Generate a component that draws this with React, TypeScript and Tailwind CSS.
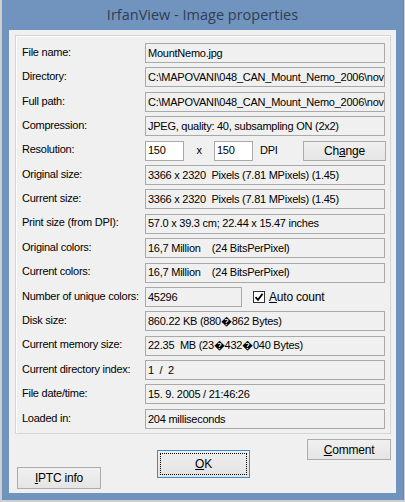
import React from "react";

const font = { fontFamily: '"Liberation Sans", Arial, sans-serif' };

function Field({ children, w = "w-[240px]" }: { children: React.ReactNode; w?: string }) {
  return (
    <div className={`${w} h-[20px] shrink-0 border border-[#a9a9a9] bg-[#f0f0f0] pl-[2px] flex items-center overflow-hidden whitespace-nowrap`}>
      {children}
    </div>
  );
}

function Row({ label, children }: { label: string; children: React.ReactNode }) {
  return (
    <div className="flex items-center h-[20px]">
      <div className="w-[123px] shrink-0 whitespace-nowrap -mt-[2px]">{label}</div>
      {children}
    </div>
  );
}

function Btn({ children, cls }: { children: React.ReactNode; cls: string }) {
  return (
    <div
      className={`${cls} shrink-0 border border-[#acacac] bg-gradient-to-b from-[#f0f0f0] to-[#e5e5e5] flex items-center justify-center text-[12px] tracking-[-0.2px] text-[#000]`}
    >
      {children}
    </div>
  );
}

export default function App() {
  const D = "\uFFFD";
  return (
    <div className="w-[405px] h-[502px] bg-[#cfcdd2] pl-[2px] overflow-hidden" style={font}>
      <div className="w-[402px] h-[500px] bg-[#7194bf] border-r border-[#6a86ab] flex flex-col">
        <div
          className="h-[30px] shrink-0 flex items-center justify-center text-[14.5px] text-[#2f3e50]"
          style={{ fontFamily: '"Open Sans", "Noto Sans", sans-serif' }}
        >
          IrfanView - Image properties
        </div>
        <div className="ml-[7px] w-[387px] h-[463px] bg-[#f0f0f0] pt-[5px] pl-[6px] text-[11px] tracking-[-0.25px] text-black">
          <div className="w-[376px] h-[399px] border border-[#d5d5d5] shadow-[inset_1px_1px_0_#ffffff] pt-[7px] pl-[6px] flex flex-col gap-[4.4px]">
            <Row label="File name:">
              <Field>MountNemo.jpg</Field>
            </Row>
            <Row label="Directory:">
              <Field>C:\MAPOVANI\048_CAN_Mount_Nemo_2006\nove\</Field>
            </Row>
            <Row label="Full path:">
              <Field>C:\MAPOVANI\048_CAN_Mount_Nemo_2006\nove\MountNemo.jpg</Field>
            </Row>
            <Row label="Compression:">
              <Field>JPEG, quality: 40, subsampling ON (2x2)</Field>
            </Row>
            <Row label="Resolution:">
              <div className="w-[39px] h-[20px] border border-[#a9a9a9] bg-white pl-[2px] flex items-center">150</div>
              <div className="w-[30px] text-center shrink-0">x</div>
              <div className="w-[39px] h-[20px] border border-[#a9a9a9] bg-white pl-[2px] flex items-center">150</div>
              <div className="ml-[7px] w-[43px] shrink-0">DPI</div>
              <Btn cls="w-[83px] h-[20px] text-[11.5px]">
                <span>
                  Ch<span className="underline">a</span>nge
                </span>
              </Btn>
            </Row>
            <Row label="Original size:">
              <Field>3366 x 2320&nbsp; Pixels (7.81 MPixels) (1.45)</Field>
            </Row>
            <Row label="Current size:">
              <Field>3366 x 2320&nbsp; Pixels (7.81 MPixels) (1.45)</Field>
            </Row>
            <Row label="Print size (from DPI):">
              <Field>57.0 x 39.3 cm; 22.44 x 15.47 inches</Field>
            </Row>
            <Row label="Original colors:">
              <Field>16,7 Million&nbsp;&nbsp;&nbsp; (24 BitsPerPixel)</Field>
            </Row>
            <Row label="Current colors:">
              <Field>16,7 Million&nbsp;&nbsp;&nbsp; (24 BitsPerPixel)</Field>
            </Row>
            <Row label="Number of unique colors:">
              <Field w="w-[97px]">45296</Field>
              <div className="ml-[11px] w-[12px] h-[12px] border border-[#333333] bg-white flex items-center justify-center shrink-0">
                <svg width="10" height="10" viewBox="0 0 10 10">
                  <path d="M1.5 5.2 L4 7.8 L8.6 1.8" stroke="#000" strokeWidth="1.8" fill="none" />
                </svg>
              </div>
              <div className="ml-[4px] text-[12px] tracking-[-0.2px]">
                <span className="underline">A</span>uto count
              </div>
            </Row>
            <Row label="Disk size:">
              <Field>860.22 KB (880{D}862 Bytes)</Field>
            </Row>
            <Row label="Current memory size:">
              <Field>22.35&nbsp; MB (23{D}432{D}040 Bytes)</Field>
            </Row>
            <Row label="Current directory index:">
              <Field>1&nbsp; /&nbsp; 2</Field>
            </Row>
            <Row label="File date/time:">
              <Field>15. 9. 2005 / 21:46:26</Field>
            </Row>
            <Row label="Loaded in:">
              <Field>204 milliseconds</Field>
            </Row>
          </div>
          <div className="flex items-start">
            <Btn cls="mt-[33px] ml-[2px] w-[84px] h-[22px]">
              <span>
                <span className="underline">I</span>PTC info
              </span>
            </Btn>
            <div className="mt-[16px] ml-[56px] w-[93px] h-[28px] shrink-0 border border-[#3c8be0] bg-gradient-to-b from-[#eeeeee] to-[#e3e3e3] p-[2px]">
              <div className="w-full h-full border border-dotted border-black flex items-center justify-center text-[12px]">
                <span>
                  <span className="underline">O</span>K
                </span>
              </div>
            </div>
            <Btn cls="mt-[5px] ml-[57px] w-[84px] h-[21px]">
              <span>
                <span className="underline">C</span>omment
              </span>
            </Btn>
          </div>
        </div>
      </div>
    </div>
  );
}
